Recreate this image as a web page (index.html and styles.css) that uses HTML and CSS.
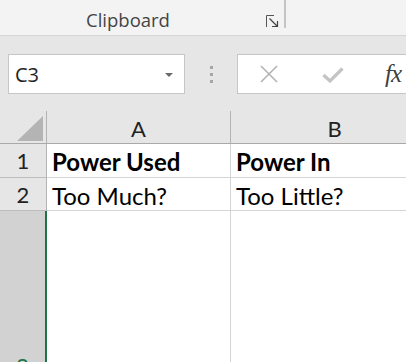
FILE: index.html
```html
<!DOCTYPE html>
<html lang="en">
<head>
    <meta charset="UTF-8">
    <meta name="viewport" content="width=device-width, initial-scale=1.0">
    <title>Power Sheet</title>
    <link rel="stylesheet" href="styles.css">
</head>
<body>
    <!-- Ribbon (bottom of the Home tab) -->
    <div class="ribbon">
        <div class="ribbon-group">
            <span class="group-label">Clipboard</span>
            <svg class="launcher" width="14" height="14" viewBox="0 0 14 14">
                <path d="M1.5 13 V1.5 H9" fill="none" stroke="#555" stroke-width="1"/>
                <path d="M4.5 4.5 L12 12" fill="none" stroke="#444" stroke-width="1.2"/>
                <path d="M12.5 7 V12.5 H7" fill="none" stroke="#444" stroke-width="1.2"/>
            </svg>
        </div>
        <div class="group-sep"></div>
    </div>

    <!-- Name box + formula bar -->
    <div class="formula-row">
        <div class="name-box">
            <span>C3</span>
            <span class="drop-arrow"></span>
        </div>
        <div class="grip">
            <span></span><span></span><span></span>
        </div>
        <div class="formula-box">
            <svg class="fb-icon cancel" width="18" height="18" viewBox="0 0 18 18">
                <path d="M1 1 L17 17 M17 1 L1 17" stroke="#b3b3b3" stroke-width="1.6"/>
            </svg>
            <svg class="fb-icon enter" width="22" height="16" viewBox="0 0 22 16">
                <path d="M1.5 8 L8 14 L20.5 1.5" fill="none" stroke="#c4c4c4" stroke-width="3.2"/>
            </svg>
            <span class="fx">fx</span>
        </div>
    </div>

    <!-- Sheet grid -->
    <div class="sheet">
        <div class="corner"><span class="corner-tri"></span></div>
        <div class="col-head">A</div>
        <div class="col-head">B</div>

        <div class="row-head">1</div>
        <div class="cell bold">Power Used</div>
        <div class="cell bold">Power In</div>

        <div class="row-head">2</div>
        <div class="cell">Too Much?</div>
        <div class="cell">Too Little?</div>

        <div class="row-head active">3</div>
        <div class="cell"></div>
        <div class="cell"></div>
    </div>
</body>
</html>
```

FILE: styles.css
```css
body {
    margin: 0;
    width: 406px;
    height: 362px;
    overflow: hidden;
    background-color: #e6e6e6;
    font-family: "Open Sans", "Noto Sans", sans-serif;
}

/* ---------- ribbon ---------- */
.ribbon {
    height: 35px;
    background-color: #f3f3f3;
    border-bottom: 1px solid #d5d5d5;
    display: flex;
}

.ribbon-group {
    width: 284px;
    display: flex;
    align-items: flex-end;
}

.group-label {
    margin-left: 86px;
    font-size: 18.5px;
    line-height: 24px;
    color: #444;
    padding-bottom: 3px;
}

.launcher {
    margin-left: 95px;
    margin-bottom: 7px;
}

.group-sep {
    width: 2px;
    height: 28px;
    background-color: #c4c4c4;
}

/* ---------- formula bar ---------- */
.formula-row {
    height: 75px;
    display: flex;
    align-items: flex-start;
    padding-top: 18px;
    box-sizing: border-box;
}

.name-box {
    margin-left: 8px;
    width: 177px;
    height: 40px;
    box-sizing: border-box;
    border: 1px solid #c6c6c6;
    background-color: #fff;
    display: flex;
    align-items: center;
    justify-content: space-between;
    padding: 0 11px 0 6px;
    font-size: 20px;
    color: #222;
}

.drop-arrow {
    width: 0;
    height: 0;
    border-left: 4px solid transparent;
    border-right: 4px solid transparent;
    border-top: 4px solid #6a6a6a;
    margin-top: 2px;
}

.grip {
    width: 52px;
    height: 40px;
    display: flex;
    flex-direction: column;
    align-items: center;
    justify-content: center;
    gap: 4px;
}

.grip span {
    width: 3px;
    height: 3px;
    background-color: #a6a6a6;
}

.formula-box {
    flex: 1;
    height: 40px;
    box-sizing: border-box;
    border: 1px solid #c6c6c6;
    border-right: none;
    background-color: #fff;
    display: flex;
    align-items: center;
}

.fb-icon.cancel {
    margin-left: 22px;
}

.fb-icon.enter {
    margin-left: 44px;
    margin-top: 2px;
}

.fx {
    margin-left: 41px;
    font-family: "Liberation Serif", serif;
    font-style: italic;
    font-size: 25px;
    color: #3f3f3f;
    letter-spacing: -1px;
}

/* ---------- sheet ---------- */
.sheet {
    display: grid;
    grid-template-columns: 47px 184px 208px;
    grid-template-rows: 33px 34px 33px 310px;
    background-color: #fff;
    font-family: "Lato", "Liberation Sans", sans-serif;
}

.corner,
.col-head,
.row-head {
    background-color: #e6e6e6;
    box-sizing: border-box;
}

.corner {
    border-right: 1px solid #b3b3b3;
    border-bottom: 1px solid #a9a9a9;
    position: relative;
}

.corner-tri {
    position: absolute;
    right: 3px;
    bottom: 2px;
    width: 0;
    height: 0;
    border-left: 26px solid transparent;
    border-bottom: 25px solid #b4b4b4;
}

.col-head {
    border-right: 1px solid #b3b3b3;
    border-bottom: 1px solid #a9a9a9;
    display: flex;
    align-items: center;
    justify-content: center;
    font-size: 22px;
    color: #222;
    padding-top: 2px;
}

.row-head {
    border-right: 1px solid #b3b3b3;
    border-bottom: 1px solid #bdbdbd;
    display: flex;
    align-items: center;
    justify-content: center;
    font-size: 22px;
    color: #222;
}

.row-head.active {
    background-color: #d2d2d2;
    border-right: 2px solid #217346;
    color: #217346;
}

.cell {
    box-sizing: border-box;
    border-right: 1px solid #d4d4d4;
    border-bottom: 1px solid #d4d4d4;
    display: flex;
    align-items: center;
    padding: 2px 0 0 5px;
    font-size: 24px;
    color: #000;
    white-space: nowrap;
    overflow: hidden;
}

.cell.bold {
    font-weight: bold;
}
```
